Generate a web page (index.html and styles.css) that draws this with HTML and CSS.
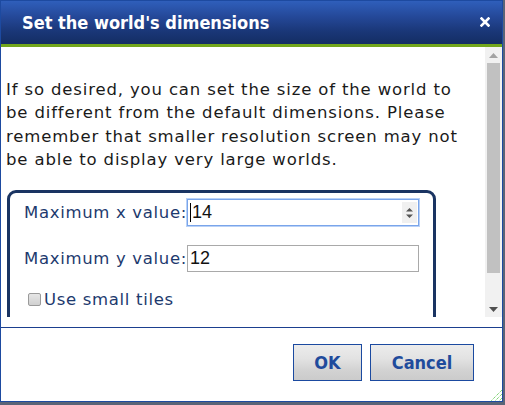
FILE: index.html
```html
<!DOCTYPE html>
<html>
<head>
<meta charset="utf-8">
<link rel="stylesheet" href="styles.css">
</head>
<body>
<div class="dialog">
  <div class="titlebar">
    <span class="title">Set the world's dimensions</span>
    <span class="close"><svg width="10" height="10" viewBox="0 0 10 10"><path d="M1.5 1.5 L8.5 8.5 M8.5 1.5 L1.5 8.5" stroke="#fff" stroke-width="2.6" stroke-linecap="square"/></svg></span>
  </div>
  <div class="pane">
    <div class="content">
      <p class="intro">If so desired, you can set the size of the world to be different from the default dimensions. Please remember that smaller resolution screen may not be able to display very large worlds.</p>
      <fieldset class="dims">
        <div class="row">
          <span class="label">Maximum x value:</span>
          <div class="field focused"><span class="caret"></span><span class="val">14</span>
            <span class="spin"><svg width="7" height="12" viewBox="0 0 7 12"><path d="M0 4.5 L3.5 1 L7 4.5Z M0 7.5 L3.5 11 L7 7.5Z" fill="#555"/></svg></span>
          </div>
        </div>
        <div class="row">
          <span class="label">Maximum y value:</span>
          <div class="field"><span class="val">12</span></div>
        </div>
        <div class="check"><span class="box"></span><span class="label">Use small tiles</span></div>
      </fieldset>
    </div>
    <div class="scrollbar">
      <div class="arrow up"><svg width="9" height="5" viewBox="0 0 9 5"><path d="M0 5 L4.5 0 L9 5Z" fill="#a3a3a3"/></svg></div>
      <div class="track"><div class="thumb"></div></div>
      <div class="arrow down"><svg width="9" height="5" viewBox="0 0 9 5"><path d="M0 0 L4.5 5 L9 0Z" fill="#505050"/></svg></div>
    </div>
  </div>
  <div class="buttons">
    <button class="btn ok">OK</button>
    <button class="btn cancel">Cancel</button>
  </div>
  <svg class="grip" width="12" height="12" viewBox="0 0 12 12"><path d="M12 1 L1 12 M12 5 L5 12 M12 9 L9 12" stroke="#4cc43c" stroke-width="1" stroke-dasharray="1 1"/></svg>
</div>
</body>
</html>
```
FILE: styles.css
```css
html, body {
  margin: 0;
  padding: 0;
}
body {
  background: #5a6477;
  width: 505px;
  height: 405px;
  overflow: hidden;
  font-family: "DejaVu Sans", sans-serif;
}
.dialog {
  position: relative;
  width: 501px;
  height: 400px;
  border: 1px solid #1d4aa0;
  background: #fff;
  display: flex;
  flex-direction: column;
}
.titlebar {
  height: 43px;
  border-bottom: 3px solid #72a61c;
  background: linear-gradient(#2f5fbb 0%, #25499a 35%, #1a3778 70%, #142d63 100%);
  display: flex;
  align-items: center;
  justify-content: space-between;
  padding: 0 12px 0 21px;
  flex: none;
}
.title {
  color: #fff;
  font-family: "DejaVu Sans Condensed", "DejaVu Sans", sans-serif;
  font-weight: bold;
  font-size: 18px;
  margin-top: -1px;
}
.close {
  display: flex;
  margin-top: -1px;
}
.pane {
  height: 270px;
  display: flex;
  flex: none;
}
.content {
  flex: 1;
  overflow: hidden;
  padding: 0 20px 0 5px;
}
.intro {
  margin: 31px 0 19px 0;
  font-size: 16.5px;
  letter-spacing: 0.85px;
  line-height: 23.3px;
  color: #1a1a1a;
}
.dims {
  margin: 0 0 0 1px;
  width: 399px;
  border: 3px solid #1a3462;
  border-radius: 9px;
  padding: 6px 10px 20px 14px;
  min-height: 200px;
}
.row {
  display: flex;
  align-items: center;
  height: 27px;
  margin-bottom: 19px;
}
.label {
  color: #1d3a6e;
  font-size: 16.5px;
  letter-spacing: 0.68px;
  flex: none;
}
.field {
  width: 228px;
  height: 25px;
  border: 1px solid #a9a9a9;
  display: flex;
  align-items: center;
  font-family: "Liberation Sans", Arial, sans-serif;
  font-size: 18px;
  color: #111;
  padding-left: 2px;
  box-sizing: content-box;
}
.field.focused {
  border-color: #7aa5ea;
  box-shadow: 0 0 0 1px #b9d1f7;
}
.caret {
  width: 1px;
  height: 19px;
  background: #000;
  margin-right: 1px;
}
.val {
  flex: 1;
}
.spin {
  width: 15px;
  height: 21px;
  background: #f0f0f0;
  display: flex;
  align-items: center;
  justify-content: center;
  margin-right: 1px;
}
.check {
  display: flex;
  align-items: center;
  margin-top: -1px;
}
.box {
  width: 11px;
  height: 11px;
  border: 1px solid #9a9a9a;
  border-radius: 2px;
  background: linear-gradient(#e6e6e6, #d0d0d0);
  margin: 0 3px 0 4px;
}
.scrollbar {
  width: 17px;
  background: #f1f1f1;
  display: flex;
  flex-direction: column;
  flex: none;
}
.arrow {
  height: 16px;
  display: flex;
  align-items: center;
  justify-content: center;
}
.track {
  flex: 1;
  padding: 0 2px;
}
.thumb {
  height: 210px;
  background: #c1c1c1;
}
.buttons {
  margin-top: 10px;
  border-top: 1px solid #1b3f8f;
  padding: 16px 28px 0 0;
  display: flex;
  justify-content: flex-end;
  gap: 8px;
}
.btn {
  height: 37px;
  border: 1px solid #1b4aa0;
  background: linear-gradient(#ececec 0%, #e2e2e2 40%, #d3d3d3 70%, #cbcbcb 100%);
  color: #1f4b9c;
  font-family: "DejaVu Sans Condensed", "DejaVu Sans", sans-serif;
  font-weight: bold;
  font-size: 18px;
  padding: 0;
  margin: 0;
}
.ok {
  width: 69px;
}
.cancel {
  width: 104px;
}
.grip {
  position: absolute;
  right: 0;
  bottom: 0;
}
```
